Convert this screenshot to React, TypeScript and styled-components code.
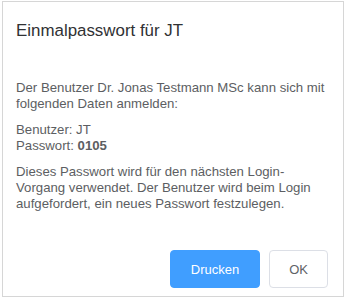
import React from "react";
import styled, { createGlobalStyle } from "styled-components";

const Global = createGlobalStyle`
  html, body { margin: 0; padding: 0; background: #ffffff; }
  body { font-family: "Liberation Sans", Arial, sans-serif; }
  * { box-sizing: border-box; }
`;

const Dialog = styled.div`
  margin: 1px 2px;
  height: 296px;
  border: 1px solid #d6d6d6;
  background: #ffffff;
  display: flex;
  flex-direction: column;
`;

const Header = styled.div`
  padding: 17px 13px 0 13px;
`;

const Title = styled.h2`
  margin: 0;
  font-size: 16.9px;
  line-height: 24px;
  font-weight: 400;
  color: #303133;
`;

const Body = styled.div`
  padding: 37px 10px 0 13px;
  font-size: 13.2px;
  line-height: 16px;
  color: #5c5e62;
`;

const Para = styled.p`
  margin: 0 0 10px 0;
  &:last-child { margin-bottom: 0; }
`;

const Footer = styled.div`
  margin-top: auto;
  padding: 0 15px 8px 13px;
  display: flex;
  justify-content: flex-end;
  gap: 9px;
`;

const Button = styled.button<{ $primary?: boolean }>`
  height: 38px;
  padding: 0 ${(p) => (p.$primary ? "20px" : "19px")};
  border-radius: 4px;
  font-family: "Liberation Sans", Arial, sans-serif;
  font-size: 13px;
  line-height: 1;
  cursor: pointer;
  border: 1px solid ${(p) => (p.$primary ? "#409eff" : "#dcdfe6")};
  background: ${(p) => (p.$primary ? "#409eff" : "#ffffff")};
  color: ${(p) => (p.$primary ? "#ffffff" : "#606266")};
`;

export default function App() {
  return (
    <>
      <Global />
      <Dialog>
        <Header>
          <Title>Einmalpasswort für JT</Title>
        </Header>
        <Body>
          <Para>Der Benutzer Dr. Jonas Testmann MSc kann sich mit folgenden Daten anmelden:</Para>
          <Para>
            Benutzer: JT
            <br />
            Passwort: <b>0105</b>
          </Para>
          <Para>
            Dieses Passwort wird für den nächsten Login-Vorgang verwendet. Der Benutzer wird beim Login
            aufgefordert, ein neues Passwort festzulegen.
          </Para>
        </Body>
        <Footer>
          <Button $primary>Drucken</Button>
          <Button>OK</Button>
        </Footer>
      </Dialog>
    </>
  );
}
